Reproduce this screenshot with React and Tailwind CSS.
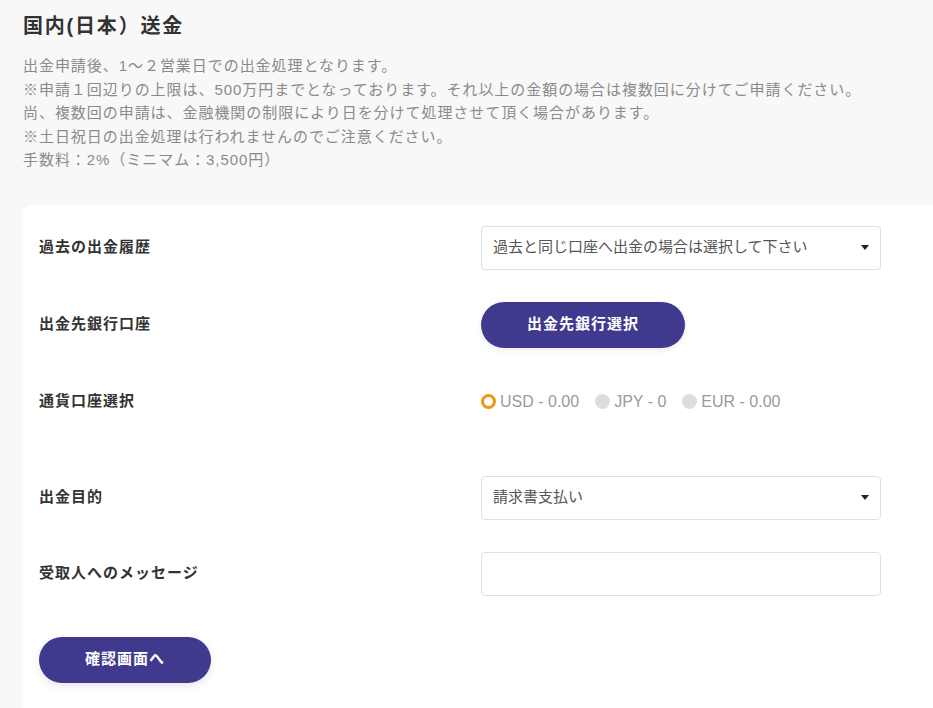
import React from "react";

const font = { fontFamily: '"Liberation Sans", "Noto Sans CJK JP", sans-serif' };

const Caret = () => (
  <span className="w-0 h-0 border-l-[4px] border-r-[4px] border-t-[5px] border-l-transparent border-r-transparent border-t-[#222]" />
);

const SelectBox = ({ value }) => (
  <div className="w-[400px] h-[44px] bg-white border border-[#e0e0e0] rounded-[4px] flex items-center justify-between pl-[11px] pr-[11px]">
    <span className="text-[15px] text-[#555]">{value}</span>
    <Caret />
  </div>
);

const Row = ({ label, className = "", children }) => (
  <div className={`flex items-center ${className}`}>
    <div className="w-[458px] shrink-0 pl-[16px] text-[15px] font-bold text-[#333] tracking-[1px]">{label}</div>
    <div className="flex items-center">{children}</div>
  </div>
);

const Radio = ({ label, checked }) => (
  <label className="flex items-center gap-[4px] mr-[16px]">
    {checked ? (
      <span className="w-[15px] h-[15px] rounded-full border-[3px] border-[#f0960f] bg-white" />
    ) : (
      <span className="w-[15px] h-[15px] rounded-full bg-[#dddddd]" />
    )}
    <span className="text-[16px] text-[#9a9a9a]">{label}</span>
  </label>
);

const App = () => {
  return (
    <div className="min-h-screen bg-[#f8f8f9] overflow-hidden" style={font}>
      <div className="pl-[23px] pt-[12px]">
        <h1 className="text-[20px] leading-[28px] font-bold text-[#333] tracking-[1.8px]">国内(日本）送金</h1>
        <div className="mt-[14px] text-[15px] leading-[23.5px] text-[#8a8a8a] tracking-[0.95px]">
          <p>出金申請後、1～２営業日での出金処理となります。</p>
          <p>※申請１回辺りの上限は、500万円までとなっております。それ以上の金額の場合は複数回に分けてご申請ください。</p>
          <p>尚、複数回の申請は、金融機関の制限により日を分けて処理させて頂く場合があります。</p>
          <p>※土日祝日の出金処理は行われませんのでご注意ください。</p>
          <p>手数料：2%（ミニマム：3,500円）</p>
        </div>
      </div>

      <div className="ml-[23px] mt-[33px] bg-white rounded-tl-[8px] pt-[21px] pb-[40px]">
        <Row label="過去の出金履歴" className="h-[44px]">
          <SelectBox value="過去と同じ口座へ出金の場合は選択して下さい" />
        </Row>

        <Row label="出金先銀行口座" className="h-[46px] mt-[32px]">
          <button className="w-[204px] h-[46px] rounded-full bg-[#3f3a8e] text-white text-[15px] font-bold tracking-[1px] shadow-[0_2px_6px_rgba(0,0,0,0.08)]">
            出金先銀行選択
          </button>
        </Row>

        <Row label="通貨口座選択" className="h-[44px] mt-[32px]">
          <Radio label="USD - 0.00" checked />
          <Radio label="JPY - 0" />
          <Radio label="EUR - 0.00" />
        </Row>

        <Row label="出金目的" className="h-[44px] mt-[52px]">
          <SelectBox value="請求書支払い" />
        </Row>

        <Row label="受取人へのメッセージ" className="h-[44px] mt-[32px]">
          <input className="w-[400px] h-[44px] bg-white border border-[#e0e0e0] rounded-[4px] px-[11px] outline-none" />
        </Row>

        <div className="pl-[16px] mt-[41px]">
          <button className="w-[172px] h-[46px] rounded-full bg-[#3f3a8e] text-white text-[15px] font-bold tracking-[1px] shadow-[0_3px_8px_rgba(0,0,0,0.1)]">
            確認画面へ
          </button>
        </div>
      </div>
    </div>
  );
};

export default App;
